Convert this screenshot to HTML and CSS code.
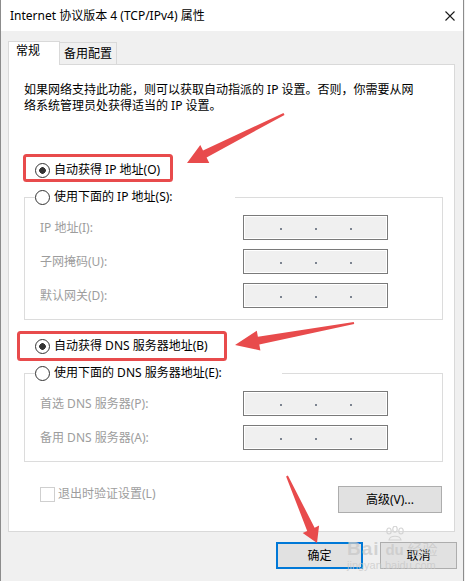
FILE: index.html
```html
<!DOCTYPE html>
<html lang="zh-CN">
<head>
    <meta charset="UTF-8">
    <title>Internet 协议版本 4 (TCP/IPv4) 属性</title>
    <link rel="stylesheet" href="styles.css">
</head>
<body>

    <div class="window">
        <div class="titlebar">
            <span class="title">Internet 协议版本 4 (TCP/IPv4) 属性</span>
            <svg class="close" width="10" height="10" viewBox="0 0 10 10">
                <path d="M0.5 0.5L9.5 9.5M9.5 0.5L0.5 9.5" stroke="#1a1a1a" stroke-width="1.1" fill="none"/>
            </svg>
        </div>

        <div class="content">
            <div class="tabs">
                <div class="tab active">常规</div>
                <div class="tab">备用配置</div>
            </div>

            <div class="panel">
                <p class="intro">如果网络支持此功能，则可以获取自动指派的 IP 设置。否则，你需要从网<br>络系统管理员处获得适当的 IP 设置。</p>

                <div class="radio checked auto-ip">自动获得 IP 地址(O)</div>

                <fieldset class="group">
                    <legend class="legend-ip"><span class="radio">使用下面的 IP 地址(S):</span></legend>
                    <div class="fields">
                        <span class="field-label">IP 地址(I):</span>
                        <span class="ip"><i></i><i></i><i></i></span>
                        <span class="field-label">子网掩码(U):</span>
                        <span class="ip"><i></i><i></i><i></i></span>
                        <span class="field-label">默认网关(D):</span>
                        <span class="ip"><i></i><i></i><i></i></span>
                    </div>
                </fieldset>

                <div class="radio checked auto-dns">自动获得 DNS 服务器地址(B)</div>

                <fieldset class="group">
                    <legend class="legend-dns"><span class="radio">使用下面的 DNS 服务器地址(E):</span></legend>
                    <div class="fields">
                        <span class="field-label">首选 DNS 服务器(P):</span>
                        <span class="ip"><i></i><i></i><i></i></span>
                        <span class="field-label">备用 DNS 服务器(A):</span>
                        <span class="ip"><i></i><i></i><i></i></span>
                    </div>
                </fieldset>

                <div class="panel-footer">
                    <span class="checkbox">退出时验证设置(L)</span>
                    <span class="button advanced">高级(V)...</span>
                </div>
            </div>

            <div class="actions">
                <span class="button ok">确定</span>
                <span class="button cancel">取消</span>
            </div>
        </div>

        <!-- 标注: 红框和箭头 -->
        <svg class="marks" width="465" height="581" viewBox="0 0 465 581">
            <rect x="24.5" y="155.5" width="147" height="25" rx="2" fill="none" stroke="#e84b4c" stroke-width="3"/>
            <rect x="18.5" y="332.5" width="207" height="27" rx="2" fill="none" stroke="#e84b4c" stroke-width="3"/>
            <polygon fill="#e84b4c" points="284.5,114.9 206.6,157.6 209.3,162.9 187,163 200.3,145.1 203,150.4 283.5,113.1"/>
            <polygon fill="#e84b4c" points="354.2,324 259.3,344.5 260.4,350.4 235,345 256.8,330.8 257.9,336.7 353.8,322"/>
            <polygon fill="#e84b4c" points="287.9,475.6 314.6,527.7 319.1,525.6 317,543 302.7,533 307.2,530.9 286.1,476.4"/>
        </svg>

        <div class="watermark">
            <div class="wm-logo">
                <span class="wm-bai">Bai</span>
                <span class="wm-du">
                    <svg class="wm-paw" width="22" height="16" viewBox="0 0 22 16">
                        <g fill="none" stroke="#d4d4d4" stroke-width="1.2">
                            <ellipse cx="5" cy="5" rx="2.2" ry="3"/>
                            <ellipse cx="11" cy="3.2" rx="2.2" ry="3"/>
                            <ellipse cx="17" cy="5" rx="2.2" ry="3"/>
                            <path d="M5 14 C6 9 16 9 17 14 Z"/>
                        </g>
                    </svg>
                    du
                </span>
                <span class="wm-jy">经验</span>
            </div>
            <div class="wm-url">jingyan.baidu.com</div>
        </div>
    </div>

</body>
</html>
```

FILE: styles.css
```css
* {
    box-sizing: border-box;
}

body {
    margin: 0;
    background-color: #f0f0f0;
    font-family: "Noto Sans", "Noto Sans CJK SC", sans-serif;
    font-size: 12px;
    line-height: 16px;
    color: #000;
}

.window {
    position: relative;
    width: 464px;
    height: 581px;
    background-color: #f0f0f0;
    border-left: 1px solid #8c8c8c;
    border-right: 1px solid #8c8c8c;
    overflow: hidden;
}

.titlebar {
    display: flex;
    justify-content: space-between;
    align-items: center;
    height: 31px;
    padding: 0 8px 0 9px;
    background-color: #fff;
}

.close {
    display: block;
}

.content {
    padding: 10px 8px 0 7px;
}

.tabs {
    display: flex;
    align-items: flex-end;
    height: 23px;
}

.tab {
    height: 22px;
    width: 58px;
    margin-left: -1px;
    padding: 3px 0 0 4px;
    border: 1px solid #d9d9d9;
    border-bottom: none;
    background-color: #f0f0f0;
}

.tab.active {
    position: relative;
    z-index: 1;
    height: 24px;
    width: 52px;
    margin-left: 0;
    margin-bottom: -1px;
    padding: 1px 0 0 7px;
    background-color: #fff;
}

.panel {
    height: 468px;
    padding: 17px 11px 0 15px;
    background-color: #fff;
    border: 1px solid #d9d9d9;
}

.intro {
    margin: 0;
}

.radio {
    display: flex;
    align-items: center;
    gap: 4px;
    height: 16px;
    white-space: nowrap;
}

.radio::before {
    content: "";
    flex: none;
    width: 13px;
    height: 13px;
    border: 1px solid #333;
    border-radius: 50%;
    background-color: #fff;
}

.radio.checked::before {
    background: radial-gradient(circle, #333 0 3px, #fff 3.6px);
}

.auto-ip {
    margin: 48px 0 0 11px;
}

.auto-dns {
    margin: 18px 0 0 11px;
}

.group {
    margin: 11px 0 0 0;
    padding: 10px 0 11px 0;
    border: 1px solid #dcdcdc;
    min-width: 0;
}

.group legend {
    margin-left: 10px;
    padding: 0;
    background-color: #fff;
}

.legend-ip {
    width: 200px;
}

.legend-dns {
    width: 247px;
}

.fields {
    display: grid;
    grid-template-columns: 203px 145px;
    grid-auto-rows: 25px;
    row-gap: 9px;
    align-items: center;
    padding-left: 15px;
}

.field-label {
    color: #9d9d9d;
    white-space: nowrap;
}

.ip {
    display: flex;
    align-items: center;
    gap: 33px;
    height: 25px;
    padding: 3px 0 0 36px;
    background-color: #f0f0f0;
    border: 1px solid #7a7a7a;
    box-shadow: inset 0 0 0 1px #fff;
}

.ip i {
    width: 2px;
    height: 2px;
    background-color: #7c8490;
}

.panel-footer {
    display: flex;
    justify-content: space-between;
    align-items: flex-start;
    margin: 24px 1px 0 16px;
}

.checkbox {
    display: flex;
    align-items: center;
    gap: 3px;
    color: #9d9d9d;
}

.checkbox::before {
    content: "";
    width: 13px;
    height: 13px;
    border: 1px solid #cfcfcf;
    background-color: #fff;
}

.button {
    display: flex;
    justify-content: center;
    align-items: center;
    height: 27px;
    background-color: #e1e1e1;
    border: 1px solid #adadad;
}

.advanced {
    width: 104px;
}

.actions {
    display: flex;
    justify-content: flex-end;
    gap: 17px;
    margin: 10px -2px 0 0;
}

.ok {
    width: 87px;
    border: 2px solid #0078d7;
}

.cancel {
    width: 77px;
}

.marks {
    position: absolute;
    top: 0;
    left: -1px;
    pointer-events: none;
}

.watermark {
    position: absolute;
    left: 346px;
    top: 524px;
    color: rgba(200, 200, 200, 0.75);
    font-family: "Liberation Sans", sans-serif;
    pointer-events: none;
}

.wm-logo {
    display: flex;
    align-items: flex-end;
    height: 34px;
}

.wm-bai {
    font-size: 19px;
    font-weight: bold;
    line-height: 19px;
    letter-spacing: 1px;
}

.wm-du {
    display: flex;
    flex-direction: column;
    align-items: center;
    margin-left: 4px;
    font-size: 15px;
    font-weight: bold;
    line-height: 16px;
}

.wm-jy {
    margin-left: 2px;
    font-family: "Noto Sans CJK SC", sans-serif;
    font-size: 15px;
    line-height: 19px;
}

.wm-url {
    font-size: 11px;
    line-height: 12px;
    margin-top: 1px;
}
```
